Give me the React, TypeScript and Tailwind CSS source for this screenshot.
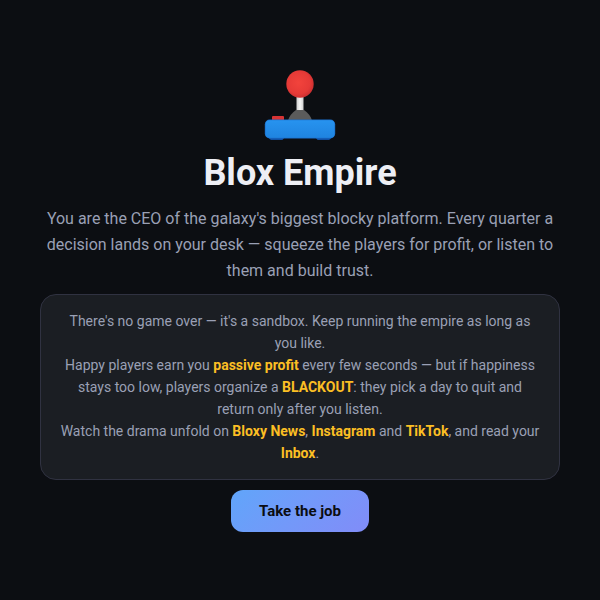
import type { ReactNode } from "react";

function Joystick() {
  return (
    <svg viewBox="0 0 72 72" className="w-[72px] h-[72px]" role="img" aria-label="Joystick">
      <defs>
        <radialGradient id="ball" cx="0.45" cy="0.45" r="0.55">
          <stop offset="0" stopColor="#f2433c" />
          <stop offset="0.75" stopColor="#e63a37" />
          <stop offset="1" stopColor="#cf3031" />
        </radialGradient>
        <linearGradient id="stick" x1="0" y1="0" x2="1" y2="0">
          <stop offset="0" stopColor="#cfcfcf" />
          <stop offset="0.5" stopColor="#f5f5f5" />
          <stop offset="1" stopColor="#cfcfcf" />
        </linearGradient>
        <linearGradient id="base" x1="0" y1="0" x2="0" y2="1">
          <stop offset="0" stopColor="#2793ef" />
          <stop offset="1" stopColor="#1f84e0" />
        </linearGradient>
      </defs>
      <path d="M4 69h17l-3 3.500H9q-3 0-5-3.500z" fill="#0f4fa3" />
      <path d="M68 69H51l3 3.500h9q3 0 5-3.500z" fill="#0f4fa3" />
      <rect x="32.500" y="28" width="7" height="15" fill="url(#stick)" />
      <path d="M24 52.500c1-4 4-8 8-10.500h8c4 2.500 7 6.500 8 10.500z" fill="#5b5b5b" />
      <rect x="8" y="48" width="12" height="6" rx="1" fill="#d83434" />
      <circle cx="36" cy="16" r="13.700" fill="url(#ball)" />
      <rect x="0.800" y="51.500" width="70.400" height="19" rx="5" fill="#1b6fcb" />
      <rect x="1.600" y="52.300" width="68.800" height="17.400" rx="4" fill="url(#base)" />
    </svg>
  );
}

function Mark({ children }: { children: ReactNode }) {
  return <b className="font-bold text-[#fbbf24]">{children}</b>;
}

export default function App() {
  return (
    <main
      className="min-h-screen flex flex-col items-center justify-center gap-2.5 p-10
        bg-[#0c0e12] text-center text-[#9aa0b5] font-['Roboto',sans-serif]"
    >
      <Joystick />

      <h1 className="text-4xl leading-[46px] font-bold text-[#eeeff5]">Blox Empire</h1>

      <p className="max-w-[520px] text-base leading-[26px]">
        You are the CEO of the galaxy's biggest blocky platform. Every quarter a
        decision lands on your desk — squeeze the players for profit, or listen to
        them and build trust.
      </p>

      {/* Rules */}
      <div
        className="max-w-[520px] px-[18px] py-[15px] rounded-2xl border border-[#303241]
          bg-[#1b1e23] text-sm leading-[22px]"
      >
        <p>
          There's no game over — it's a sandbox. Keep running the empire as long as
          you like.
        </p>
        <p>
          Happy players earn you <Mark>passive profit</Mark> every few seconds — but if
          happiness stays too low, players organize a <Mark>BLACKOUT</Mark>: they pick a
          day to quit and return only after you listen.
        </p>
        <p>
          Watch the drama unfold on <Mark>Bloxy News</Mark>, <Mark>Instagram</Mark> and{" "}
          <Mark>TikTok</Mark>, and read your <Mark>Inbox</Mark>.
        </p>
      </div>

      <button
        type="button"
        className="px-7 py-3 rounded-xl bg-linear-135 from-[#60a5fa] to-[#818cf8]
          text-[15px] leading-[18px] font-bold text-[#0b0d12] cursor-pointer"
      >
        Take the job
      </button>
    </main>
  );
}
